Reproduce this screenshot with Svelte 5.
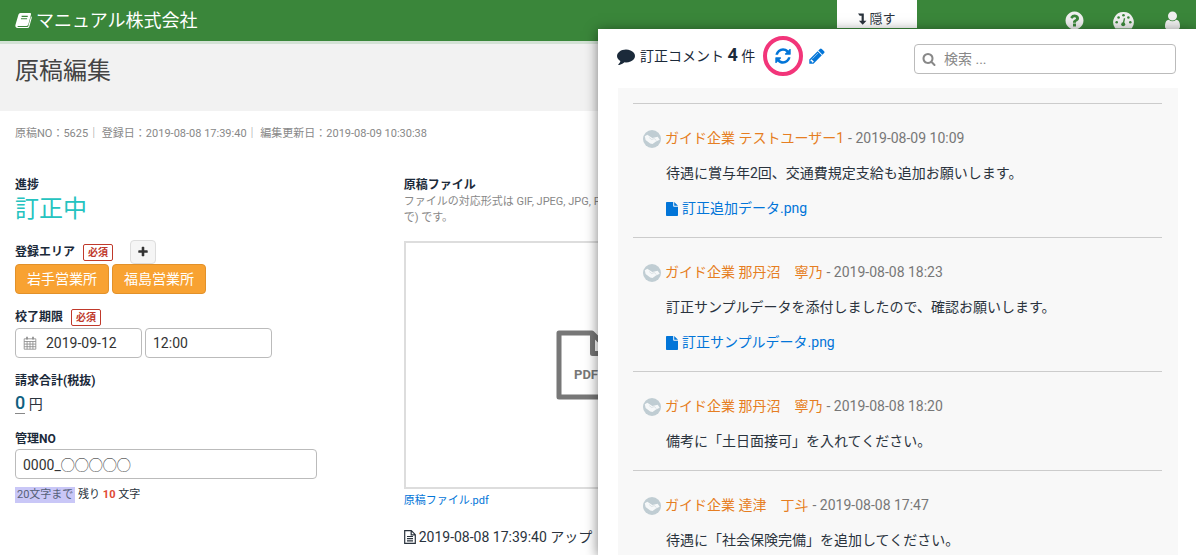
<script lang="ts">
  interface Comment {
    author: string;
    date: string;
    body: string;
    file?: string;
  }

  const areas = ['岩手営業所', '福島営業所'];

  const comments: Comment[] = [
    {
      author: 'ガイド企業 テストユーザー1',
      date: '2019-08-09 10:09',
      body: '待遇に賞与年2回、交通費規定支給も追加お願いします。',
      file: '訂正追加データ.png'
    },
    {
      author: 'ガイド企業 那丹沼　寧乃',
      date: '2019-08-08 18:23',
      body: '訂正サンプルデータを添付しましたので、確認お願いします。',
      file: '訂正サンプルデータ.png'
    },
    {
      author: 'ガイド企業 那丹沼　寧乃',
      date: '2019-08-08 18:20',
      body: '備考に「土日面接可」を入れてください。'
    },
    {
      author: 'ガイド企業 達津　丁斗',
      date: '2019-08-08 17:47',
      body: '待遇に「社会保険完備」を追加してください。'
    }
  ];

  let deadline = $state('2019-09-12');
  let time = $state('12:00');
  let manageNo = $state('0000_◯◯◯◯◯');
  let keyword = $state('');
</script>

<div class="page">
  <header class="navbar">
    <a class="brand" href="#top">
      <svg class="icon-book" viewBox="0 0 18 18">
        <path d="M5.8 1h10q1.500 0 1.200 1.300l-2.900 11q-.4 1.500-1.900 1.500H3.200q-.9 0-.8.5.1.500.9.500h9.600q1 0 1.300-1L17 4.600q1 .5.700 1.700l-2.500 9q-.5 1.700-2.100 1.700H2.900Q.200 17 .4 14.400q0-.5.200-1.200L3.700 2.700Q4.200 1 5.800 1z" />
        <path class="lines" d="M7 4.600h6.500M6.300 7.100h6.500" />
      </svg>
      マニュアル株式会社
    </a>
    <nav class="nav-icons">
      <a href="#help" aria-label="ヘルプ">
        <svg viewBox="0 0 1792 1792"><path d="M1024 1376v-192q0-14-9-23t-23-9h-192q-14 0-23 9t-9 23v192q0 14 9 23t23 9h192q14 0 23-9t9-23zm256-672q0-88-55.500-163t-138.500-116-170-41q-243 0-371 213-15 24 8 42l132 100q7 6 19 6 16 0 25-12 53-68 86-92 34-24 86-24 48 0 85.500 26t37.500 59q0 38-20 61t-68 45q-63 28-115.500 86.500t-52.500 125.500v36q0 14 9 23t23 9h192q14 0 23-9t9-23q0-19 21.500-49.500t54.500-49.500q32-18 49-28.500t46-35 44.500-48 28-60.500 12.500-81zm384 192q0 209-103 385.500t-279.500 279.500-385.500 103-385.500-103-279.500-279.500-103-385.500 103-385.500 279.500-279.500 385.500-103 385.500 103 279.500 279.500 103 385.500z" /></svg>
      </a>
      <a href="#dashboard" aria-label="ダッシュボード">
        <svg viewBox="0 0 21 21">
          <path d="M10.500 2A10.200 10.200 0 0 0 2 18q.4.600 1.100.6h14.800q.7 0 1.100-.6A10.200 10.200 0 0 0 10.500 2z" />
          <g class="cut">
            <circle cx="3.700" cy="12.300" r="1.300" /><circle cx="5.600" cy="7.500" r="1.300" />
            <circle cx="10.500" cy="5.300" r="1.300" /><circle cx="15.400" cy="7.500" r="1.300" />
            <circle cx="17.300" cy="12.300" r="1.300" /><circle cx="10.200" cy="14.300" r="2" />
            <path d="M9.600 13.700l1.300-5.600 1.300.3-1.300 5.600z" />
          </g>
        </svg>
      </a>
      <a href="#account" aria-label="アカウント">
        <svg viewBox="0 0 1792 1792"><path d="M1536 1399q0 109-62.500 187t-150.500 78h-854q-88 0-150.500-78t-62.500-187q0-85 8.500-160.500t31.500-152 58.500-131 94-89 134.500-34.500q131 128 313 128t313-128q76 0 134.500 34.500t94 89 58.500 131 31.500 152 8.500 160.500zm-256-887q0 159-112.500 271.500t-271.500 112.500-271.500-112.500-112.500-271.500 112.500-271.500 271.500-112.500 271.500 112.500 112.500 271.500z" /></svg>
      </a>
    </nav>
  </header>

  <div class="page-title">
    <h1>原稿編集</h1>
  </div>

  <main>
    <p class="meta">原稿NO：5625｜ 登録日：2019-08-08 17:39:40｜ 編集更新日：2019-08-09 10:30:38</p>

    <div class="columns">
      <div class="column">
        <section class="progress">
          <h2>進捗</h2>
          <p class="status">訂正中</p>
        </section>

        <section class="area">
          <div class="label-row">
            <h2>登録エリア</h2>
            <span class="required">必須</span>
            <button class="add" type="button" aria-label="エリアを追加">
              <svg viewBox="0 0 1792 1792"><path d="M1600 736v192q0 40-28 68t-68 28h-416v416q0 40-28 68t-68 28h-192q-40 0-68-28t-28-68v-416h-416q-40 0-68-28t-28-68v-192q0-40 28-68t68-28h416v-416q0-40 28-68t68-28h192q40 0 68 28t28 68v416h416q40 0 68 28t28 68z" /></svg>
            </button>
          </div>
          <div class="tags">
            {#each areas as area}
              <button class="tag" type="button">{area}</button>
            {/each}
          </div>
        </section>

        <section class="deadline">
          <div class="label-row">
            <label for="deadline">校了期限</label>
            <span class="required">必須</span>
          </div>
          <div class="inputs">
            <div class="field date">
              <svg viewBox="0 0 14 14">
                <path d="M1.200 2.800h11.600v10.400H1.200zM1.200 5.500h11.600M1.200 8.100h11.600M1.200 10.700h11.600M4.100 5.500v7.700M7 5.500v7.700M9.900 5.500v7.700" />
                <path class="ring" d="M4 .8v2.800M10 .8v2.800" />
              </svg>
              <input id="deadline" type="text" bind:value={deadline} />
            </div>
            <div class="field">
              <input type="text" aria-label="校了時刻" bind:value={time} />
            </div>
          </div>
        </section>

        <section class="total">
          <h2>請求合計(税抜)</h2>
          <p><a href="#total">0</a> 円</p>
        </section>

        <section class="manage">
          <label for="manage-no">管理NO</label>
          <div class="field">
            <input id="manage-no" type="text" bind:value={manageNo} />
          </div>
          <p class="counter"><span class="limit">20文字まで</span> 残り <b>10</b> 文字</p>
        </section>
      </div>

      <div class="column">
        <h2>原稿ファイル</h2>
        <p class="note">ファイルの対応形式は GIF, JPEG, JPG, PNG, PDF (20MBま<br />で) です。</p>
        <div class="preview">
          <svg viewBox="0 0 60 70">
            <path class="outline" d="M3 3h33l21 21v43H3z" />
            <path class="outline" d="M36.500 3v20.500H57" />
            <text x="30" y="49" text-anchor="middle">PDF</text>
          </svg>
        </div>
        <a class="file-link" href="#file">原稿ファイル.pdf</a>
        <p class="uploaded">
          <svg viewBox="0 0 12 14">
            <path d="M.7.7h6.600l4 4v8.600H.7zM7.200.7v4.100h4.100M3 6.500h6M3 8.700h6M3 10.900h6" />
          </svg>
          2019-08-08 17:39:40 アップ
        </p>
      </div>
    </div>
  </main>

  <button class="hide-tab" type="button">
    <svg viewBox="0 0 9 12"><path d="M0 .5h5.800v7.300h2.700L4.700 11.800.9 7.800h2.700V2.700H1.700z" /></svg>
    隠す
  </button>

  <aside class="panel">
    <div class="panel-head">
      <svg class="icon-comment" viewBox="0 0 1792 1792"><path d="M1792 896q0 174-120 321.500t-326 233-450 85.500q-70 0-145-8-198 175-460 242-49 14-114 22-17 2-30.500-9t-17.500-29v-1q-3-4-.5-12t2-10 4.500-9.500l6-9 7-8.500 8-9q7-8 31-34.500t34.500-38 31-39.500 32.500-51 27-59 26-76q-157-89-247.500-220t-90.500-281q0-130 71-248.500t191-204.500 286-136.500 348-50.500q244 0 450 85.500t326 233 120 321.500z" /></svg>
      <p class="count">訂正コメント <b>4</b> 件</p>
      <button class="refresh" type="button" aria-label="更新">
        <svg viewBox="0 0 1792 1792"><path d="M1639 1056q0 5-1 7-64 268-268 434.500t-478 166.500q-146 0-282.500-55t-243.500-157l-129 129q-19 19-45 19t-45-19-19-45v-448q0-26 19-45t45-19h448q26 0 45 19t19 45-19 45l-137 137q71 66 161 102t187 36q134 0 250-65t186-179q11-17 53-117 8-23 30-23h192q13 0 22.500 9.500t9.500 22.500zm25-800v448q0 26-19 45t-45 19h-448q-26 0-45-19t-19-45 19-45l138-138q-148-137-349-137-134 0-250 65t-186 179q-11 17-53 117-8 23-30 23h-199q-13 0-22.500-9.500t-9.500-22.500v-7q65-268 270-434.500t480-166.500q146 0 284 55.500t245 156.500l130-129q19-19 45-19t45 19 19 45z" /></svg>
      </button>
      <button class="edit" type="button" aria-label="編集">
        <svg viewBox="0 0 1792 1792"><path d="M491 1536l91-91-235-235-91 91v107h128v128h107zm523-928q0-22-22-22-10 0-17 7l-542 542q-7 7-7 17 0 22 22 22 10 0 17-7l542-542q7-7 7-17zm-54-192l416 416-832 832h-416v-416zm683 96q0 53-37 90l-166 166-416-416 166-165q36-38 90-38 53 0 91 38l235 234q37 39 37 91z" /></svg>
      </button>
      <div class="field search">
        <svg viewBox="0 0 1792 1792"><path d="M1216 832q0-185-131.500-316.500t-316.500-131.500-316.500 131.500-131.500 316.500 131.500 316.500 316.500 131.500 316.500-131.500 131.500-316.500zm512 832q0 52-38 90t-90 38q-54 0-90-38l-343-342q-179 124-399 124-143 0-273.500-55.500t-225-150-150-225-55.500-273.500 55.500-273.500 150-225 225-150 273.500-55.500 273.500 55.500 225 150 150 225 55.500 273.500q0 220-124 399l343 343q37 37 37 90z" /></svg>
        <input type="text" aria-label="検索" placeholder="検索 ..." bind:value={keyword} />
      </div>
    </div>

    <div class="comments">
      {#each comments as comment}
        <article class="comment">
          <div class="comment-head">
            <svg class="avatar" viewBox="0 0 18 18">
              <circle cx="9" cy="9" r="9" />
              <path d="M1.800 6.200l2.500-1.400 5 3.300 5.400-1.300 2 3-3.700 1.600-3.500 2.600-2.300-.5-4.600-3.600z" />
              <path class="crease" d="M6.200 7.600l2.400 1.900 2.600-.9 2.200 1.900" />
            </svg>
            <span class="author">{comment.author}</span>
            <time>- {comment.date}</time>
          </div>
          <p class="body">{comment.body}</p>
          {#if comment.file}
            <a class="attachment" href="#attachment">
              <svg viewBox="0 0 12 14"><path d="M.8 0h6.400v4q0 .8.800.8h4v8.400q0 .8-.8.800H.8q-.8 0-.8-.8V.8Q0 0 .8 0zM8.200 0L12 3.800H8.200z" /></svg>
              {comment.file}
            </a>
          {/if}
        </article>
      {/each}
    </div>
  </aside>
</div>

<style>
  :global(body) {
    overflow: hidden;
  }

  .page {
    position: relative;
    height: 100vh;
    overflow: hidden;
    background: #fff;
    color: #2a333d;
    font-family: Roboto, 'Noto Sans CJK JP', sans-serif;
    font-size: 14px;
    line-height: 20px;
  }

  .page * {
    box-sizing: border-box;
  }

  h1,
  h2,
  p {
    margin: 0;
  }

  a {
    color: #0275d8;
    text-decoration: none;
  }

  svg {
    display: block;
    flex: none;
    fill: currentColor;
  }

  button,
  input {
    font: inherit;
    color: inherit;
  }

  button {
    padding: 0;
    border: none;
    background: none;
    cursor: pointer;
  }

  h2,
  label {
    display: block;
    color: #1b2a3a;
    font-size: 12px;
    font-weight: 700;
    line-height: 18px;
  }

  .navbar {
    display: flex;
    justify-content: space-between;
    align-items: center;
    height: 44px;
    padding: 0 13px 0 15px;
    background: #3a863a;
    border-bottom: 3px solid #d3e2d5;
  }

  .brand {
    display: flex;
    align-items: center;
    gap: 4px;
    color: #fff;
    font-size: 18px;
  }

  .icon-book {
    width: 17px;
    height: 17px;
  }

  .icon-book .lines {
    stroke: #3a863a;
    stroke-width: 1.2;
  }

  .nav-icons {
    display: flex;
    gap: 28px;
  }

  .nav-icons a {
    color: #efefef;
  }

  .nav-icons svg {
    width: 21px;
    height: 21px;
  }

  .nav-icons .cut {
    fill: #3a863a;
  }

  .page-title {
    padding: 12px 15px 25px;
    background: #f2f2f2;
  }

  h1 {
    color: #444;
    font-size: 24px;
    font-weight: 400;
    line-height: 30px;
  }

  main {
    padding: 15px;
  }

  .meta {
    color: #888;
    font-size: 11px;
    line-height: 16px;
  }

  .columns {
    display: grid;
    grid-template-columns: repeat(3, 1fr);
    margin-top: 34px;
  }

  .column {
    padding-right: 24px;
  }

  .status {
    color: #25c3c0;
    font-size: 24px;
    line-height: 30px;
  }

  .label-row {
    display: flex;
    align-items: center;
  }

  .required {
    margin-left: 8px;
    padding: 0 4px;
    border: 1px solid #c0392b;
    border-radius: 2px;
    color: #c0392b;
    font-size: 10px;
    font-weight: 700;
    line-height: 15px;
  }

  .area {
    margin-top: 16px;
  }

  .add {
    display: flex;
    justify-content: center;
    align-items: center;
    width: 26px;
    height: 24px;
    margin-left: 17px;
    border: 1px solid #ddd;
    border-radius: 4px;
    background: #f5f5f5;
    color: #333;
  }

  .add svg {
    width: 12px;
    height: 12px;
  }

  .tags {
    display: flex;
    gap: 3px;
  }

  .tag {
    height: 30px;
    padding: 0 11px;
    border: 1px solid #e2912a;
    border-radius: 4px;
    background: #f8a232;
    color: #fff;
  }

  .deadline {
    margin-top: 14px;
  }

  .inputs {
    display: flex;
    gap: 3px;
    margin-top: 2px;
  }

  .inputs .field {
    width: 127px;
  }

  .field {
    display: flex;
    align-items: center;
    height: 30px;
    border: 1px solid #bbb;
    border-radius: 4px;
    background: #fff;
    color: #333;
  }

  .field input {
    flex: 1;
    min-width: 0;
    height: 100%;
    padding: 0 7px;
    border: none;
    outline: none;
    background: none;
  }

  .date svg {
    width: 14px;
    height: 14px;
    margin: 0 2px 0 7px;
    fill: none;
    stroke: #888;
    stroke-width: 0.8;
  }

  .date .ring {
    stroke-width: 1.6;
  }

  .total {
    margin-top: 14px;
  }

  .total p {
    margin-top: 3px;
  }

  .total a {
    border-bottom: 1px solid #888;
    color: #0f6080;
    font-size: 18px;
    font-weight: 500;
  }

  .manage {
    margin-top: 16px;
  }

  .manage .field {
    max-width: 302px;
    margin-top: 1px;
  }

  .counter {
    margin-top: 8px;
    font-size: 11px;
    line-height: 16px;
  }

  .limit {
    display: inline-block;
    padding: 0 2px;
    background: #c9c7f7;
    color: #555f78;
  }

  .counter b {
    color: #e04a35;
  }

  .note {
    color: #888;
    font-size: 11px;
    line-height: 16px;
    white-space: nowrap;
  }

  .preview {
    display: flex;
    justify-content: center;
    align-items: center;
    height: 248px;
    margin-top: 15px;
    border: 2px solid #ddd;
  }

  .preview svg {
    width: 60px;
    height: 70px;
    fill: #777;
  }

  .preview text {
    font-size: 13px;
    font-weight: 700;
  }

  .preview .outline {
    fill: none;
    stroke: #777;
    stroke-width: 5;
    stroke-linejoin: round;
  }

  .file-link {
    display: block;
    margin-top: 2px;
    font-size: 11px;
  }

  .uploaded {
    display: flex;
    align-items: center;
    gap: 3px;
    margin-top: 16px;
  }

  .uploaded svg {
    width: 12px;
    height: 14px;
    fill: none;
    stroke: currentColor;
    stroke-width: 1.2;
  }

  .hide-tab {
    position: absolute;
    top: 0;
    right: 279px;
    display: flex;
    justify-content: center;
    align-items: center;
    gap: 2px;
    width: 80px;
    height: 28px;
    padding-top: 10px;
    background: #fff;
    font-size: 13px;
  }

  .hide-tab svg {
    width: 9px;
    height: 12px;
  }

  .panel {
    position: absolute;
    top: 29px;
    right: 0;
    bottom: 0;
    display: flex;
    flex-direction: column;
    width: 50%;
    background: #fff;
    box-shadow: 0 2px 12px rgba(0, 0, 0, 0.5);
  }

  .panel-head {
    display: flex;
    align-items: center;
    height: 59px;
    padding: 0 20px 6px 19px;
    color: #1b2a3a;
  }

  .icon-comment {
    width: 18px;
    height: 18px;
    margin-right: 5px;
  }

  .count b {
    font-size: 18px;
  }

  .refresh {
    display: flex;
    justify-content: center;
    align-items: center;
    width: 40px;
    height: 40px;
    margin-left: 8px;
    border: 4px solid #f2357a;
    border-radius: 50%;
    color: #0275d8;
  }

  .refresh svg,
  .edit svg {
    width: 18px;
    height: 18px;
  }

  .edit {
    margin-left: 5px;
    color: #0275d8;
  }

  .search {
    width: 262px;
    margin-top: 6px;
    margin-left: auto;
  }

  .search svg {
    width: 14px;
    height: 14px;
    margin: 0 1px 0 7px;
    color: #888;
  }

  .search input::placeholder {
    color: #888;
    opacity: 1;
  }

  .comments {
    flex: 1;
    min-height: 0;
    margin: 0 18px 0 20px;
    padding: 15px 16px 0 15px;
    overflow: hidden;
    background: #f8f8f8;
  }

  .comment {
    padding: 17px 10px 11px;
    border-top: 1px solid #ccc;
    line-height: 35px;
  }

  .comment-head {
    display: flex;
    align-items: center;
    gap: 4px;
    height: 35px;
  }

  .avatar {
    width: 18px;
    height: 18px;
    fill: #c0cdd3;
  }

  .avatar path {
    fill: #f6f8f9;
  }

  .avatar .crease {
    fill: none;
    stroke: #d3dce0;
    stroke-width: 0.8;
  }

  .author {
    color: #e67e22;
  }

  time {
    color: #777;
  }

  .body {
    padding-left: 23px;
  }

  .attachment {
    display: flex;
    align-items: center;
    gap: 4px;
    margin-left: 23px;
  }

  .attachment svg {
    width: 12px;
    height: 14px;
  }
</style>
